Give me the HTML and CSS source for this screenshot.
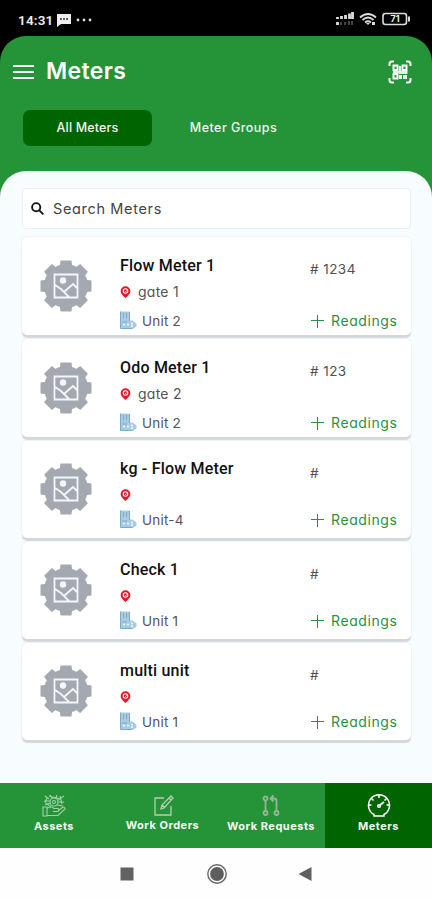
FILE: index.html
```html
<!DOCTYPE html>
<html lang="en">
<head>
<meta charset="utf-8">
<title>Meters</title>
<link rel="stylesheet" href="styles.css">
</head>
<body>
<svg class="defs" width="0" height="0" aria-hidden="true">
  <symbol id="gear" viewBox="0 0 52 52">
    <g fill="#a4a9b1"><circle cx="26" cy="26" r="22"/>
      <path id="tooth" d="M20.5 0.5h11l1 8h-13zM20.5 51.500h11l1-8h-13zM.5 20.500v11l8 1v-13zM51.500 20.500v11l-8 1v-13z"/>
      <use href="#tooth" transform="rotate(45 26 26)"/></g>
    <g fill="none" stroke="#f4f6fa" stroke-width="1.8"><path d="M14.500 14.500h23v23h-23zM15 25l6 4 8 8M24 32l9-8 5 5"/></g>
    <circle cx="23" cy="20.500" r="3.200" fill="#f4f6fa"/>
  </symbol>
  <symbol id="pin" viewBox="0 0 12 14"><path d="M6 .8a5.300 5.300 0 0 0-5.300 5.300C.7 9 4.300 12 6 13.500 7.700 12 11.300 9 11.300 6.100A5.300 5.300 0 0 0 6 .8z" fill="#e11b2b"/><circle cx="6" cy="5.900" r="2.500" fill="#e11b2b" stroke="#fff" stroke-width="1.100"/><path d="M5 5.700l1 1 1.500-1.500" fill="none" stroke="#fff" stroke-width=".8"/></symbol>
  <symbol id="unit" viewBox="0 0 17 18"><path d="M.5.500h9v9h3l4 3v3l-3 2H.5z" fill="#a9cbe0"/><path d="M.5 .5v17h12M3.500 2v5M6.500 2v5M9.500 1v9M2 11h5" fill="none" stroke="#79adca"/><path d="M3 13.500h2M7 13.500h2M11 12.500h2M11 15h2" stroke="#f5fbff" stroke-width="1.500"/></symbol>
</svg>
<div class="phone">
  <div class="status">
    <span class="clock">14:31</span>
    <svg class="chat" width="14" height="13" viewBox="0 0 14 13"><path d="M0 0h14v10H4l-4 3z" fill="#eee"/><path d="M3 5h2M6 5h2M9 5h2" stroke="#333" stroke-width="1.500"/></svg>
    <svg class="dots" width="16" height="4" viewBox="0 0 16 4" fill="#ddd"><circle cx="2" cy="2" r="1.400"/><circle cx="8" cy="2" r="1.400"/><circle cx="14" cy="2" r="1.400"/></svg>
    <svg class="system" width="76" height="16" viewBox="0 0 76 16"><path d="M1 7V5M5 7V4M9 7V3M13 7V1.500M16 7V0M1 13v-3" transform="translate(.5)" stroke="#ddd" stroke-width="2.800"/><path d="M5 13v-3M9 13v-3M13 13V9M16 13V9" stroke="#444" stroke-width="2"/><g fill="none" stroke="#ddd" stroke-width="1.700"><path d="M24 5.500q8-7 16 0M26.500 8q5.500-5 11 0M29 10.500q3-2.500 6 0"/></g><path d="M30 11h4l-2 2zM36 10h3v3h-3z" fill="#ddd"/><rect x="47" y="1.500" width="23.500" height="11" rx="2.500" fill="none" stroke="#ddd" stroke-width="1.600"/><path d="M73 4.500v5" stroke="#ddd" stroke-width="2"/><text x="59" y="10.400" text-anchor="middle" class="charge">71</text></svg>
  </div>
  <header>
    <div class="bar">
      <svg width="22" height="16" viewBox="0 0 22 16" stroke="#fff" stroke-width="2"><path d="M0 2h21M0 8h21M0 14h21"/></svg>
      <h1>Meters</h1>
      <svg class="scan" width="24" height="24" viewBox="0 0 24 24"><g fill="none" stroke="#fff" stroke-width="2"><path d="M1.500 6V4q0-2.500 2.500-2.500h2M18 1.500h2Q22.500 1.500 22.500 4v2M1.500 18v2q0 2.500 2.500 2.500h2M18 22.500h2q2.500 0 2.500-2.500v-2"/><path d="M5.500 5.500h4v4.500h-4zM14.500 5.500h4v4.500h-4zM5.500 14h4v4.500h-4z" stroke-width="2"/></g><path d="M11 6h2v5h-2zM5 11h6v2H5zM11 11h4v3h-4zM15 11h4.500v3H15zM11 15h3v4h-3zM15 15h4v4h-4z" fill="#e2f1e4"/></svg>
    </div>
    <nav class="tabs"><span class="tab selected"><b class="t-all">All Meters</b></span><span class="tab"><b class="t-groups">Meter Groups</b></span></nav>
  </header>
  <main>
    <div class="search"><svg width="13" height="13" viewBox="0 0 13 13" fill="none" stroke="#151515" stroke-width="1.900"><circle cx="5.200" cy="5.200" r="4.100"/><path d="M8.300 8.300l4 4"/></svg><span>Search Meters</span></div>
    <section class="list">
      <article class="card tall"><svg class="gear"><use href="#gear"/></svg><div class="info"><h2>Flow Meter 1</h2><p class="place"><svg class="pin"><use href="#pin"/></svg><span>gate 1</span></p><p class="unit"><svg class="building"><use href="#unit"/></svg><span>Unit 2</span></p></div><div class="side"><span class="number"># 1234</span><span class="add"><i></i>Readings</span></div></article>
      <article class="card tall"><svg class="gear"><use href="#gear"/></svg><div class="info"><h2>Odo Meter 1</h2><p class="place"><svg class="pin"><use href="#pin"/></svg><span>gate 2</span></p><p class="unit"><svg class="building"><use href="#unit"/></svg><span>Unit 2</span></p></div><div class="side"><span class="number"># 123</span><span class="add"><i></i>Readings</span></div></article>
      <article class="card"><svg class="gear"><use href="#gear"/></svg><div class="info"><h2>kg - Flow Meter</h2><p class="place"><svg class="pin"><use href="#pin"/></svg></p><p class="unit"><svg class="building"><use href="#unit"/></svg><span>Unit-4</span></p></div><div class="side"><span class="number">#</span><span class="add"><i></i>Readings</span></div></article>
      <article class="card"><svg class="gear"><use href="#gear"/></svg><div class="info"><h2>Check 1</h2><p class="place"><svg class="pin"><use href="#pin"/></svg></p><p class="unit"><svg class="building"><use href="#unit"/></svg><span>Unit 1</span></p></div><div class="side"><span class="number">#</span><span class="add"><i></i>Readings</span></div></article>
      <article class="card"><svg class="gear"><use href="#gear"/></svg><div class="info"><h2>multi unit</h2><p class="place"><svg class="pin"><use href="#pin"/></svg></p><p class="unit"><svg class="building"><use href="#unit"/></svg><span>Unit 1</span></p></div><div class="side"><span class="number">#</span><span class="add"><i></i>Readings</span></div></article>
    </section>
  </main>
  <nav class="bottom">
    <div class="item"><svg width="24" height="24" viewBox="0 0 24 24" fill="none" stroke="#a5cfa9" stroke-width="1.100"><path d="M1 13h4v9H1zM5 14.500q4-3 7 0h4q2 1 0 3h-5M16 17l5-4q2 0 2 2l-7 6.500H5"/><circle cx="12" cy="8" r="4"/><circle cx="12" cy="8" r="1.500"/><path d="M3 2l4 3M8 1l2 3M15 1l-1 3M22 2l-6 4M2 7h6M3 11l5-2M16 8h6M15 11l6 1M5 4l-2 5M18 2l2 8M7 2l11 3M4 9l5 4"/></svg><span>Assets</span></div>
    <div class="item orders"><svg width="24" height="24" viewBox="0 0 24 24" fill="none" stroke="#b4cfb3" stroke-width="1.300"><path d="M13 4H4v17h16v-9M10 15l1-4L20 2l2 2-9 10zM18 4l2 2M11 11l3 3"/></svg><span>Work Orders</span></div>
    <div class="item"><svg width="24" height="24" viewBox="0 0 24 24" fill="none" stroke="#99b594" stroke-width="1.800"><circle cx="6.500" cy="4.500" r="2"/><circle cx="6.500" cy="19" r="2"/><circle cx="17.500" cy="19" r="2"/><path d="M6.500 7v10M17.500 17V7q0-2.500-2.500-2.500h-3M14.500 1.500l-3 3 3 3"/></svg><span>Work Requests</span></div>
    <div class="item active"><svg width="24" height="24" viewBox="0 0 24 24" fill="none" stroke="#fff" stroke-width="1.500"><path d="M7 22h10v-1.500A10.500 10.500 0 1 0 7 20.500zM12 1v3M1.500 11h3M19.500 11h3M4.500 4.500l2 2M19.500 4.500l-2 2"/><circle cx="12" cy="12" r="1.300"/><path d="M13 11l4-3" stroke-width="2"/></svg><span>Meters</span></div>
  </nav>
  <div class="system-nav"><svg width="192" height="22" viewBox="0 0 192 22"><path d="M0.500 4.500h13v13h-13z" fill="#626262"/><circle cx="97" cy="11" r="9.200" fill="none" stroke="#666" stroke-width="1.400"/><circle cx="97" cy="11" r="6.900" fill="#5e5e5e"/><path d="M191.500 4v14l-13-7z" fill="#606060"/></svg></div>
</div>
</body>
</html>
```
FILE: styles.css
```css
* { box-sizing: border-box; }
body { margin: 0; background: #000; font-family: Inter, "Liberation Sans", sans-serif; font-feature-settings: "cv11"; }
.defs { position: absolute; }
.phone { width: 432px; height: 900px; display: flex; flex-direction: column; background: #000; overflow: hidden; }
h1, h2, p { margin: 0; }
svg { display: block; flex: none; }
.status { height: 36px; flex: none; display: flex; align-items: center; padding: 4px 20px 0 18px; color: #eee; }
.clock { width: 39px; font: 600 13.500px/18px Roboto, sans-serif; letter-spacing: .2px; }
.dots { margin-left: 5px; }
.system { margin-left: auto; }
.charge { font: 700 9px Inter, sans-serif; fill: #eee; }
header { height: 160px; flex: none; background: #259338; border-radius: 26px 26px 0 0; }
.bar { height: 74px; display: flex; align-items: center; padding: 0 20px 0 13px; }
.bar svg { margin-top: -2px; }
.bar h1 { color: #fff; font-size: 23px; line-height: 30px; font-weight: 600; letter-spacing: .35px; margin: -5px 0 0 11px; }
.scan { margin-left: auto; }
.tabs { display: flex; padding-left: 23px; gap: 17px; }
.tab { width: 129px; height: 36px; border-radius: 7px; display: flex; align-items: center; justify-content: center; color: #eff8ef; }
.tab b { font-weight: 500; font-size: 12.500px; white-space: nowrap; margin-top: -1px; }
.t-all { letter-spacing: .15px; }
.t-groups { letter-spacing: .45px; }
.selected { background: #006500; }
main { height: 612px; flex: none; margin-top: -25px; padding: 17px 21px 0 22px; background: #f7fcff; border-radius: 26px 26px 0 0; }
.search { height: 41px; display: flex; align-items: center; gap: 9px; padding-left: 8px; background: #fff; border: 1px solid #ebeff1; border-radius: 4px; color: #444; font-size: 14.500px; letter-spacing: .65px; }
.search span { margin-top: -1px; }
.list { margin-top: 8px; }
.card { height: 97px; margin-bottom: 4px; display: flex; background: #fff; border-radius: 5px; box-shadow: 0 3px 1px #d5d8da, 0 0 2px #e1e5e7; }
.tall { height: 98px; }
.gear { width: 52px; height: 52px; margin: 22px 0 0 18px; }
.tall .gear { margin-top: 23px; }
.info { width: 190px; margin-left: 28px; padding-top: 18px; }
h2 { color: #111; font: 500 16px/20px Roboto, sans-serif; letter-spacing: .2px; }
.tall h2 { margin-top: 1px; }
.place { height: 32px; display: flex; align-items: center; gap: 7px; color: #555; font-size: 14px; letter-spacing: .25px; }
.tall .place { line-height: 32px; }
.pin { width: 11px; height: 14px; }
.unit { height: 18px; display: flex; align-items: center; gap: 5px; color: #555; font-size: 13.500px; letter-spacing: .2px; }
.tall .unit { margin-top: 4px; }
.building { width: 17px; height: 18px; margin-top: -3px; }
.side { display: flex; flex-direction: column; padding-top: 22px; color: #505050; font-size: 13.500px; letter-spacing: .45px; }
.number { line-height: 20px; }
.add { margin-top: 28px; display: flex; align-items: center; gap: 7px; line-height: 18px; color: #2b9142; font-size: 14px; letter-spacing: .6px; }
.tall .add { margin-top: 33px; }
.add i { width: 13px; height: 13px; margin-left: 1px; background: linear-gradient(#2b9142, #2b9142) center / 13px 1.200px no-repeat, linear-gradient(#2b9142, #2b9142) center / 1.200px 13px no-repeat; }
.bottom { height: 65px; flex: none; display: grid; grid-template-columns: 108px 109px 108px 107px; background: #259338; }
.item { display: flex; flex-direction: column; align-items: center; padding-top: 11px; color: #f4faf4; font-size: 11px; line-height: 16px; font-weight: 700; letter-spacing: .5px; white-space: nowrap; }
.active { background: #006500; }
.orders span { margin-top: -1px; }
.system-nav { flex: 1; background: #fefefe; padding: 15px 0 0 120px; }
```
